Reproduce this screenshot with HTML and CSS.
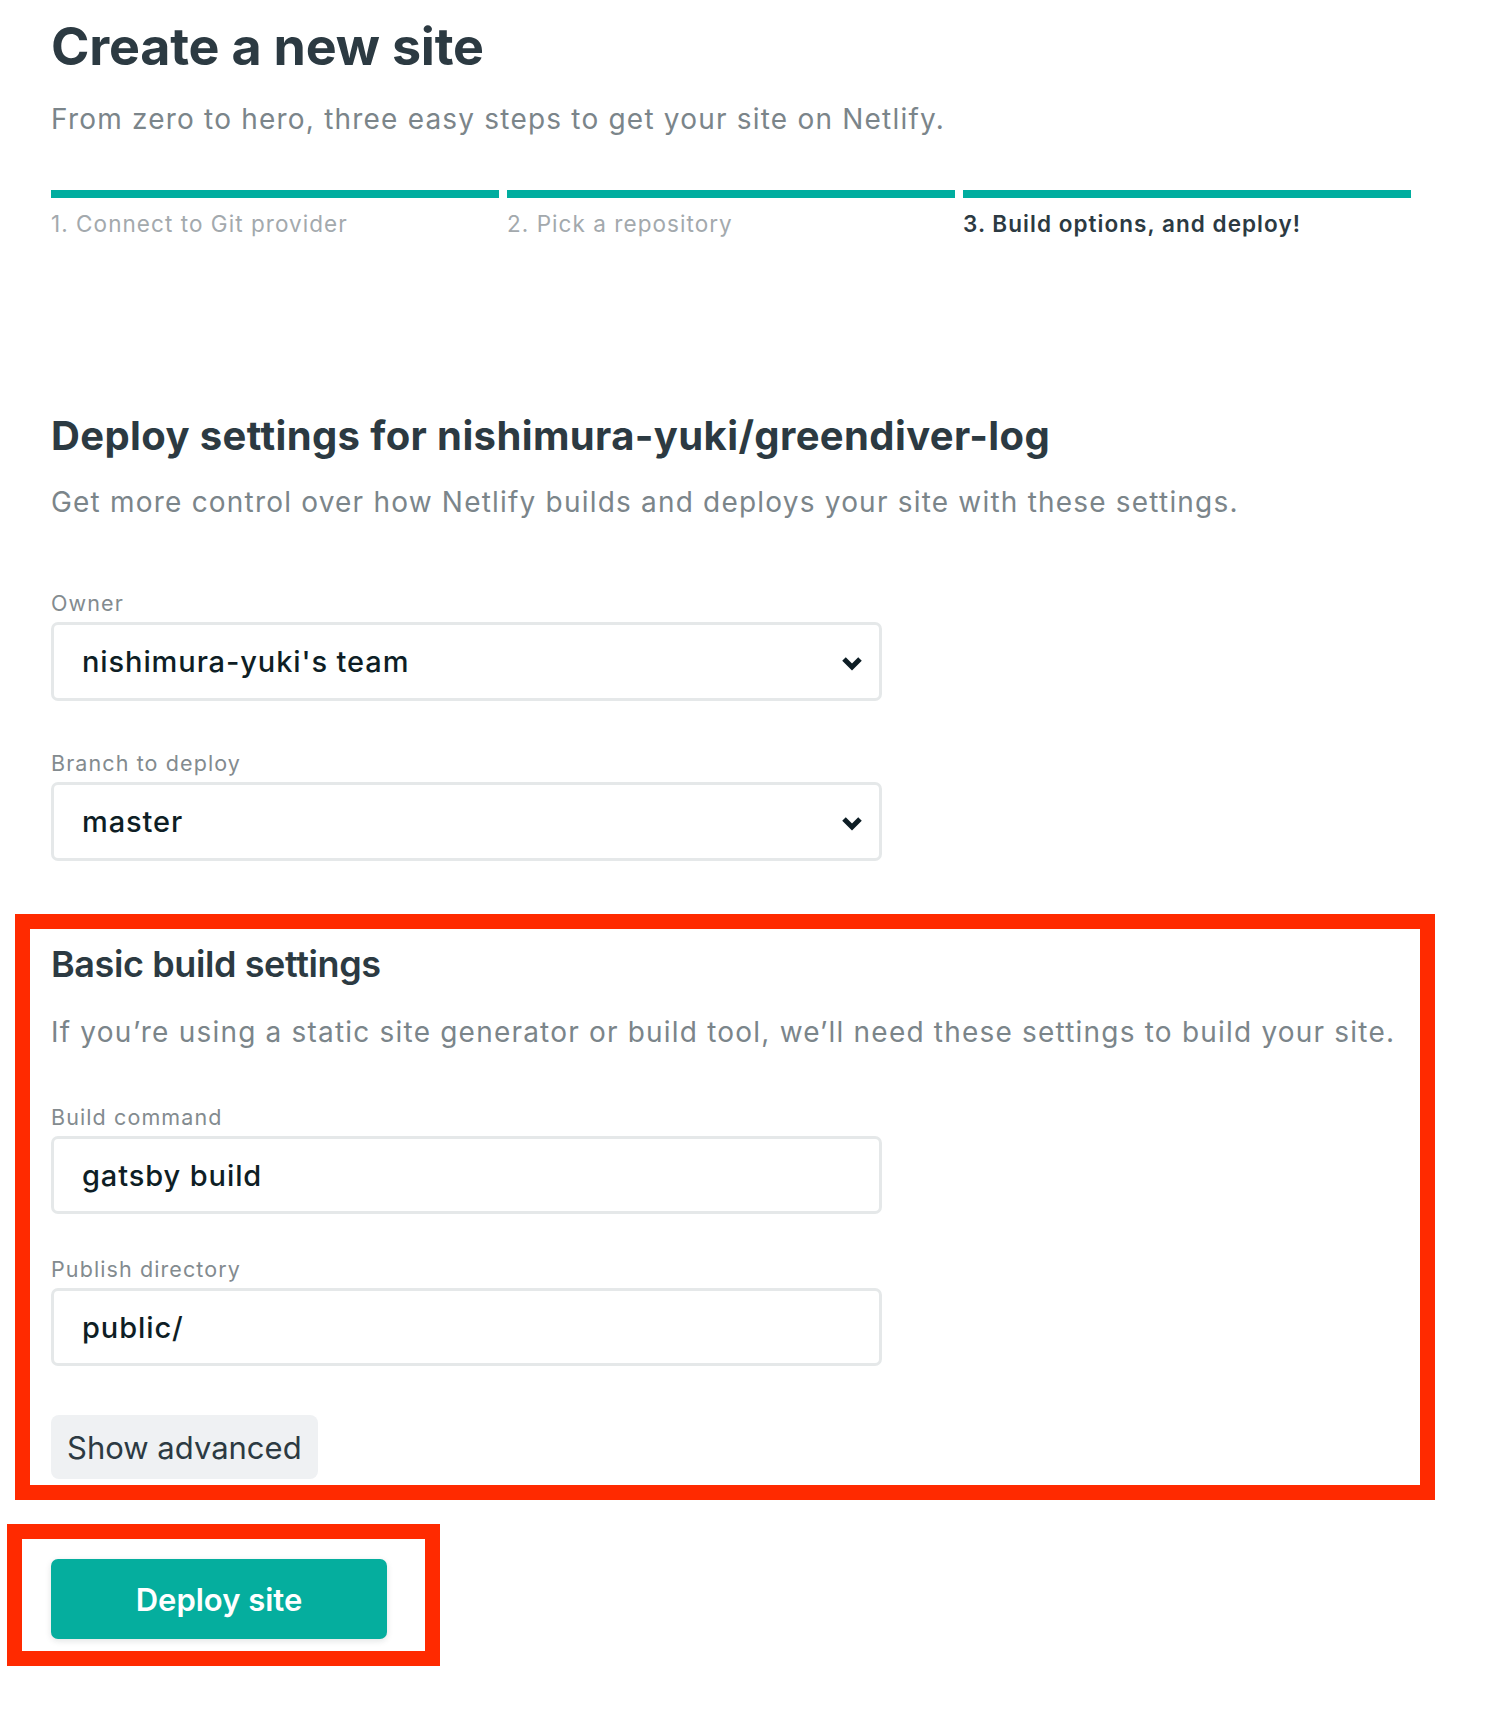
FILE: index.html
```html
<!DOCTYPE html>
<html lang="en">
<head>
<meta charset="utf-8">
<title>Create a new site</title>
<link rel="stylesheet" href="styles.css">
</head>
<body>
<main class="page">
  <h1 class="title">Create a new site</h1>
  <p class="lead">From zero to hero, three easy steps to get your site on Netlify.</p>

  <ol class="steps">
    <li class="step">1. Connect to Git provider</li>
    <li class="step">2. Pick a repository</li>
    <li class="step step-current">3. Build options, and deploy!</li>
  </ol>

  <h2 class="section-title">Deploy settings for nishimura-yuki/greendiver-log</h2>
  <p class="lead section-lead">Get more control over how Netlify builds and deploys your site with these settings.</p>

  <div class="field field-first">
    <div class="field-label">Owner</div>
    <div class="control select">
      <span>nishimura-yuki's team</span>
      <svg class="chevron" width="22" height="15" viewBox="0 0 22 15"><polyline points="3,3 11,11 19,3" fill="none" stroke="#0e1e25" stroke-width="5" stroke-linecap="butt" stroke-linejoin="miter"/></svg>
    </div>
  </div>

  <div class="field field-next">
    <div class="field-label">Branch to deploy</div>
    <div class="control select">
      <span>master</span>
      <svg class="chevron" width="22" height="15" viewBox="0 0 22 15"><polyline points="3,3 11,11 19,3" fill="none" stroke="#0e1e25" stroke-width="5" stroke-linecap="butt" stroke-linejoin="miter"/></svg>
    </div>
  </div>

  <section class="highlight build-box">
    <h3 class="box-title">Basic build settings</h3>
    <p class="lead box-lead">If you’re using a static site generator or build tool, we’ll need these settings to build your site.</p>

    <div class="field field-inbox">
      <div class="field-label">Build command</div>
      <div class="control">gatsby build</div>
    </div>

    <div class="field field-inbox-next">
      <div class="field-label">Publish directory</div>
      <div class="control">public/</div>
    </div>

    <button class="btn-secondary" type="button">Show advanced</button>
  </section>

  <div class="highlight deploy-box">
    <button class="btn-primary" type="button">Deploy site</button>
  </div>
</main>
</body>
</html>
```

FILE: styles.css
```css
* { box-sizing: border-box; }

html, body {
  margin: 0;
  background: #ffffff;
}

body {
  font-family: Inter, "Noto Sans", "Liberation Sans", sans-serif;
  color: #2d3a41;
}

.page {
  padding: 15px 0 40px 51px;
  width: 1411px;
}

.title {
  margin: 0;
  font-size: 52px;
  line-height: 64px;
  font-weight: 700;
  color: #2c3a42;
  letter-spacing: -0.2px;
}

.lead {
  margin: 22px 0 0;
  font-size: 28px;
  line-height: 36px;
  font-weight: 400;
  color: #7b858a;
  letter-spacing: 1.2px;
  white-space: nowrap;
}

.steps {
  list-style: none;
  margin: 53px 0 0;
  padding: 0;
  display: grid;
  grid-template-columns: repeat(3, 1fr);
  gap: 8px;
}

.step {
  border-top: 8px solid #00ad9f;
  padding-top: 12px;
  font-size: 22.5px;
  line-height: 28px;
  letter-spacing: 1.05px;
  color: #a3a9ad;
}

.step-current {
  color: #2c3a42;
  font-weight: 600;
}

.section-title {
  margin: 174px 0 0;
  font-size: 40px;
  line-height: 48px;
  font-weight: 700;
  color: #2c3a42;
  letter-spacing: 0.38px;
}

.section-lead {
  margin-top: 24px;
}

.field-label {
  font-size: 21.5px;
  line-height: 26px;
  letter-spacing: 1.1px;
  color: #838b8f;
  margin-bottom: 6px;
}

.field-first { margin-top: 70px; }
.field-next { margin-top: 49px; }

.control {
  width: 831px;
  height: 79px;
  border: 3px solid #e5e8e9;
  border-radius: 7px;
  padding: 0 16px 0 28px;
  display: flex;
  align-items: center;
  justify-content: space-between;
  font-size: 29px;
  font-weight: 500;
  letter-spacing: 0.9px;
  color: #0e1e25;
}

.chevron {
  flex: none;
  margin-top: 3px;
}

.highlight {
  border: 15px solid #ff2a00;
}

.build-box {
  margin: 53px 0 0 -36px;
  width: 1420px;
  padding: 13px 21px 6px 21px;
}

.box-title {
  margin: 0;
  font-size: 36px;
  line-height: 44px;
  font-weight: 600;
  color: #2c3a42;
  letter-spacing: -0.4px;
}

.box-lead {
  margin-top: 28px;
}

.field-inbox { margin-top: 54px; }
.field-inbox-next { margin-top: 42px; }

.field-inbox .control,
.field-inbox-next .control {
  height: 78px;
}

.btn-secondary {
  display: block;
  margin-top: 49px;
  height: 64px;
  padding: 0 16px;
  border: 0;
  border-radius: 8px;
  background: #eff1f3;
  font-family: inherit;
  font-size: 31px;
  font-weight: 400;
  color: #2c3a42;
}

.deploy-box {
  margin: 24px 0 0 -44px;
  width: fit-content;
  padding: 20px 38px 12px 29px;
}

.btn-primary {
  display: block;
  width: 336px;
  height: 80px;
  border: 0;
  border-radius: 7px;
  background: #05ae9e;
  box-shadow: 0 2px 6px rgba(14, 30, 37, 0.12);
  font-family: inherit;
  font-size: 31px;
  font-weight: 600;
  color: #ffffff;
}
```
